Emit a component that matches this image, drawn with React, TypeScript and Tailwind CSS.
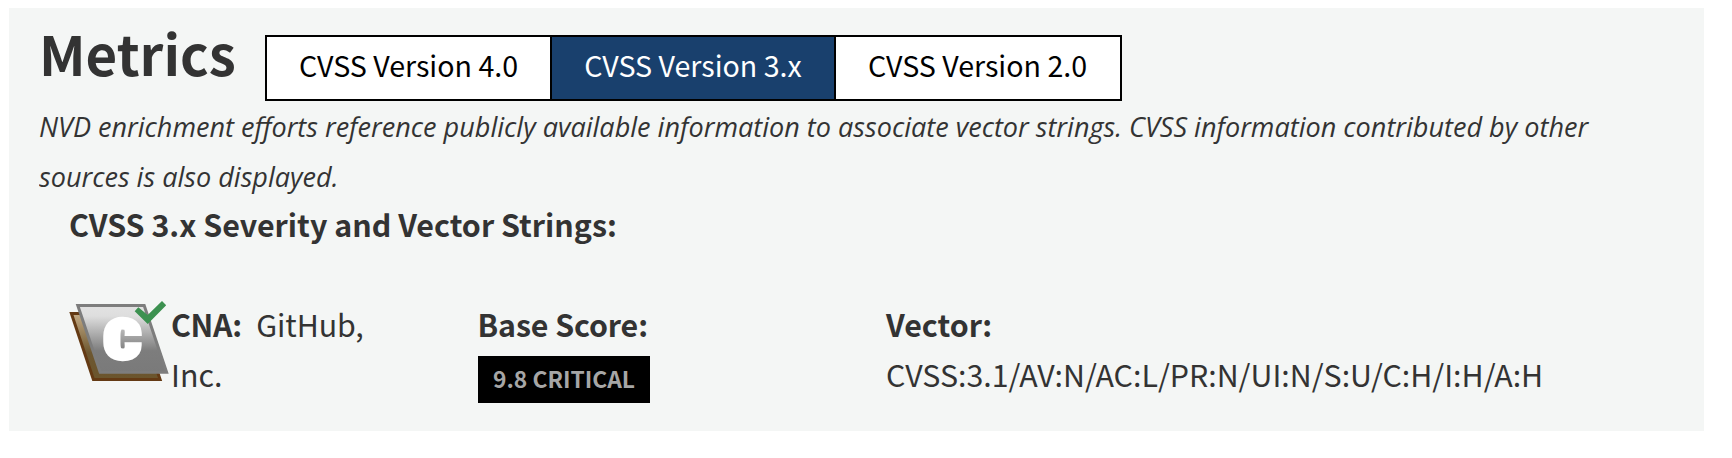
import React from "react";

const tabs = [
  { label: "CVSS Version 4.0", active: false },
  { label: "CVSS Version 3.x", active: true },
  { label: "CVSS Version 2.0", active: false },
];

function CnaIcon() {
  return (
    <svg width="100" height="82" viewBox="0 0 100 82" className="block shrink-0 overflow-visible">
      <defs>
        <linearGradient id="plate" x1="0" y1="0" x2="0" y2="1">
          <stop offset="0" stopColor="#e2e2e2" />
          <stop offset="0.16" stopColor="#dedede" />
          <stop offset="0.68" stopColor="#7d7d7d" />
          <stop offset="1" stopColor="#7a7a7a" />
        </linearGradient>
        <linearGradient id="back" x1="0" y1="0" x2="0" y2="1">
          <stop offset="0" stopColor="#c4ab85" />
          <stop offset="0.6" stopColor="#6d5730" />
          <stop offset="1" stopColor="#6b552d" />
        </linearGradient>
      </defs>
      <path d="M2.4 12.4H69L91.1 78.4H24.4Z" fill="url(#back)" stroke="#643a14" strokeWidth="3" />
      <path d="M8.8 4.4H75.2L97.6 71.2H31.2Z" fill="url(#plate)" stroke="#7d7d7d" strokeWidth="3" />
      <text
        transform="translate(53.1 57.2) scale(1.18 1)"
        textAnchor="middle"
        fill="#fff"
        stroke="#fff"
        strokeWidth="5.5"
        className="font-['Roboto',sans-serif] text-[53px] font-black [font-stretch:75%]"
      >
        C
      </text>
      <path d="M65.7 10.3L69.3 6.3L78.7 14L93 0L97.2 4.3L78.7 23Z" fill="#3c9150" />
    </svg>
  );
}

export default function App() {
  return (
    <main className="h-[458px] bg-white pl-[9px] pt-2 font-['Noto_Sans_CJK_SC',sans-serif] text-[30.35px] leading-[50px] text-[#333]">
      <section className="h-[423px] w-[1695px] bg-[#f4f6f5] pl-[30px] pt-[27px]">
        <div className="flex h-[64px]">
          <h2 className="-mt-1 w-[226px] text-[54.6px] font-bold leading-[44px] whitespace-nowrap">Metrics</h2>
          <div className="flex h-[66px] border-2 border-black bg-white">
            {tabs.map((t) => (
              <button
                key={t.label}
                className={
                  t.active
                    ? "w-[286px] border-x-2 border-black bg-[#19406d] pb-[6px] text-[28.6px] whitespace-nowrap text-white"
                    : "w-[283px] pb-[6px] text-[28.6px] whitespace-nowrap text-black last:w-[284px] last:pr-px"
                }
              >
                {t.label}
              </button>
            ))}
          </div>
        </div>
        <p className="-mb-[2px] origin-left scale-x-[0.9663] pt-[2px] text-[28px] italic whitespace-nowrap font-['Open_Sans',sans-serif]">
          NVD enrichment efforts reference publicly available information to associate vector strings. CVSS information contributed by other
          <br />
          sources is also displayed.
        </p>
        <h3 className="pl-[30px] font-bold whitespace-nowrap text-[30.4px]">CVSS 3.x Severity and Vector Strings:</h3>
        <div className="mt-[50px] flex pl-[30px]">
          <div className="flex w-[409px]">
            <div className="pt-[2px]">
              <CnaIcon />
            </div>
            <p className="w-[220px] pl-[2px]">
              <strong className="font-bold tracking-[-0.3px]">CNA:</strong>
              <span className="pl-[14.5px] tracking-[-0.1px]">GitHub,</span>
              <br />
              Inc.
            </p>
          </div>
          <div className="w-[408px]">
            <strong className="-ml-[0.5px] block font-bold tracking-[-0.1px]">Base Score:</strong>
            <span className="mt-[7px] flex h-[47px] w-[172px] items-center justify-center bg-black pb-[2px] text-[22.8px] font-bold whitespace-nowrap text-[#a6a6a6]">
              9.8 CRITICAL
            </span>
          </div>
          <div className="whitespace-nowrap">
            <strong className="block font-bold">Vector:</strong>
            <span className="block">CVSS:3.1/AV:N/AC:L/PR:N/UI:N/S:U/C:H/I:H/A:H</span>
          </div>
        </div>
      </section>
    </main>
  );
}
